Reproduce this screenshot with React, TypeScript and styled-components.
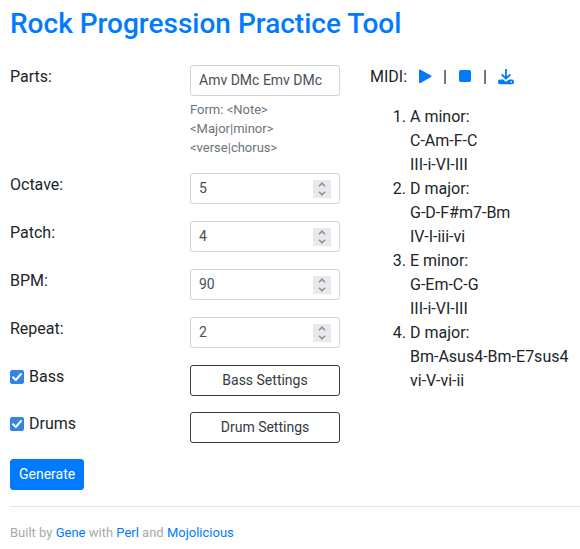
import React, { useRef } from "react";
import styled, { createGlobalStyle } from "styled-components";

const GlobalStyle = createGlobalStyle`
  *, *::before, *::after { box-sizing: border-box; }
  body {
    margin: 0;
    padding: 7px 0 8px 10px;
    background: #fff;
    color: #212529;
    font: 400 16px/24px Roboto, sans-serif;
  }
  a { color: #007bff; text-decoration: none; }
  button, input { font-family: inherit; }
`;

const Title = styled.h3`
  margin: 0 0 24px;
  font-size: 28px;
  line-height: 34px;
  font-weight: 500;
`;

const Columns = styled.main`
  display: grid;
  grid-template-columns: minmax(0, 11fr) minmax(0, 7fr);
  column-gap: 30px;
  align-items: start;
`;

const Form = styled.form`
  display: flex;
  flex-direction: column;
  align-items: flex-start;
  gap: 16px;
`;

const Row = styled.div<{ $spaced?: boolean }>`
  display: grid;
  grid-template-columns: repeat(2, minmax(0, 1fr));
  column-gap: 30px;
  align-items: start;
  width: 100%;
  padding-bottom: ${(p) => (p.$spaced ? 1 : 0)}px;
`;

const Field = styled.div`
  display: flex;
  align-items: center;
  height: 31px;
  padding: 0 8px;
  border: 1px solid #ced4da;
  border-radius: 3px;
  background: #fff;
`;

const Input = styled.input`
  flex: 1;
  min-width: 0;
  padding: 0;
  border: 0;
  outline: 0;
  background: none;
  color: #495057;
  font-size: 14px;
  line-height: 21px;
  appearance: textfield;
  &::-webkit-inner-spin-button { appearance: none; margin: 0; }
`;

const Stepper = styled.div`
  display: flex;
  flex-direction: column;
  width: 18px;
  height: 18px;
  background: #e9e9ed;
`;

const StepButton = styled.button`
  display: flex;
  flex: 1;
  align-items: center;
  justify-content: center;
  padding: 0;
  border: 0;
  background: none;
  color: #8f8f9d;
`;

const Help = styled.small`
  display: block;
  margin-top: 4px;
  color: #6c757d;
  font-size: 13px;
  line-height: 19px;
`;

const CheckLabel = styled.label`
  display: flex;
  align-items: center;
  gap: 5px;
`;

const CheckMark = styled.span`
  display: grid;
  width: 14px;
  height: 14px;
  > * { grid-area: 1 / 1; }
  svg { pointer-events: none; visibility: hidden; }
  input:checked + svg { visibility: visible; }
`;

const Checkbox = styled.input`
  appearance: none;
  width: 14px;
  height: 14px;
  margin: 0;
  border: 1px solid #8f8f9d;
  border-radius: 2px;
  &:checked { border-color: #3584e4; background: #3584e4; }
`;

const Button = styled.button<{ $primary?: boolean }>`
  height: 31px;
  padding: 4px 8px;
  border: 1px solid ${(p) => (p.$primary ? "#007bff" : "#343a40")};
  border-radius: 3px;
  background: ${(p) => (p.$primary ? "#007bff" : "transparent")};
  color: ${(p) => (p.$primary ? "#fff" : "#343a40")};
  font-size: 14px;
  line-height: 21px;
`;

const MidiBar = styled.div`
  display: flex;
  align-items: center;
  gap: 10px;
`;

const MidiLink = styled.a`
  display: flex;
`;

const PhraseList = styled.ol`
  margin: 16px 0;
  padding-left: 40px;
  white-space: nowrap;
`;

const PhraseLine = styled.div``;

const Footer = styled.footer`
  margin-top: 16px;
  padding-top: 16px;
  border-top: 1px solid #e5e5e5;
  color: #a9a9a9;
  font-size: 13px;
  line-height: 20px;
`;

function NumberRow({ id, label, value }: { id: string; label: string; value: number }) {
  const ref = useRef<HTMLInputElement>(null);
  return (
    <Row $spaced>
      <label htmlFor={id}>{label}</label>
      <Field>
        <Input ref={ref} id={id} type="number" defaultValue={value} />
        <Stepper>
          <StepButton type="button" aria-label={`Increase ${id}`} onClick={() => ref.current?.stepUp()}>
            <svg width="8" height="5" viewBox="0 0 8 5" fill="none" stroke="currentColor" strokeWidth="1.6">
              <path d="M1 4.2 4 1.2l3 3" />
            </svg>
          </StepButton>
          <StepButton type="button" aria-label={`Decrease ${id}`} onClick={() => ref.current?.stepDown()}>
            <svg width="8" height="5" viewBox="0 0 8 5" fill="none" stroke="currentColor" strokeWidth="1.6">
              <path d="M1 .8l3 3 3-3" />
            </svg>
          </StepButton>
        </Stepper>
      </Field>
    </Row>
  );
}

function ToggleRow({ label, action }: { label: string; action: string }) {
  return (
    <Row>
      <CheckLabel>
        <CheckMark>
          <Checkbox type="checkbox" defaultChecked />
          <svg width="14" height="14" viewBox="0 0 14 14" fill="none" stroke="#fff" strokeWidth="2">
            <path d="M3 7.2 5.8 10 11 4" strokeLinecap="round" strokeLinejoin="round" />
          </svg>
        </CheckMark>
        {label}
      </CheckLabel>
      <Button type="button">{action}</Button>
    </Row>
  );
}

const phrases = [
  ["A minor:", "C-Am-F-C", "III-i-VI-III"],
  ["D major:", "G-D-F#m7-Bm", "IV-I-iii-vi"],
  ["E minor:", "G-Em-C-G", "III-i-VI-III"],
  ["D major:", "Bm-Asus4-Bm-E7sus4", "vi-V-vi-ii"],
];

export default function App() {
  return (
    <>
      <GlobalStyle />
      <Title>
        <a href="#">Rock Progression Practice Tool</a>
      </Title>
      <Columns>
        <Form onSubmit={(e) => e.preventDefault()}>
          <Row>
            <label htmlFor="parts">Parts:</label>
            <div>
              <Field>
                <Input id="parts" type="text" defaultValue="Amv DMc Emv DMc" aria-describedby="parts-help" />
              </Field>
              <Help id="parts-help">{"Form: <Note> <Major|minor> <verse|chorus>"}</Help>
            </div>
          </Row>
          <NumberRow id="octave" label="Octave:" value={5} />
          <NumberRow id="patch" label="Patch:" value={4} />
          <NumberRow id="bpm" label="BPM:" value={90} />
          <NumberRow id="repeat" label="Repeat:" value={2} />
          <ToggleRow label="Bass" action="Bass Settings" />
          <ToggleRow label="Drums" action="Drum Settings" />
          <Button type="submit" $primary>Generate</Button>
        </Form>
        <section>
          <MidiBar>
            MIDI:
            <MidiLink href="#" aria-label="Play">
              <svg width="16" height="16" viewBox="0 0 16 16" fill="#007bff">
                <path d="M2 1.600c0-.9.8-1.300 1.500-.9l10.500 5.700c.8.4.8 1.300 0 1.700L3.500 13.900c-.7.4-1.500 0-1.500-.9z" />
              </svg>
            </MidiLink>
            |
            <MidiLink href="#" aria-label="Stop">
              <svg width="16" height="16" viewBox="0 0 16 16" fill="#007bff">
                <rect x="2" y="1" width="12" height="12" rx="1.8" />
              </svg>
            </MidiLink>
            |
            <MidiLink href="#" aria-label="Download">
              <svg width="18" height="16" viewBox="-1 0 18 16" fill="#007bff">
                <path d="M8 .2v9M4.200 6 8 9.700 11.800 6" fill="none" stroke="#007bff" strokeWidth="1.8" strokeLinecap="round" strokeLinejoin="round" />
                <path d="M2 10.500h3.200l1.600 1.600q1.200 1 2.400 0l1.600-1.600H14q2 0 2 2v.8q0 1.900-2 1.900H2q-2 0-2-1.900v-.8q0-2 2-2z" />
                <circle cx="13.300" cy="12.900" r=".8" fill="#fff" />
              </svg>
            </MidiLink>
          </MidiBar>
          <PhraseList>
            {phrases.map((lines, i) => (
              <li key={i}>
                {lines.map((line) => (
                  <PhraseLine key={line}>{line}</PhraseLine>
                ))}
              </li>
            ))}
          </PhraseList>
        </section>
      </Columns>
      <Footer>
        Built by <a href="#">Gene</a> with <a href="#">Perl</a> and <a href="#">Mojolicious</a>
      </Footer>
    </>
  );
}
